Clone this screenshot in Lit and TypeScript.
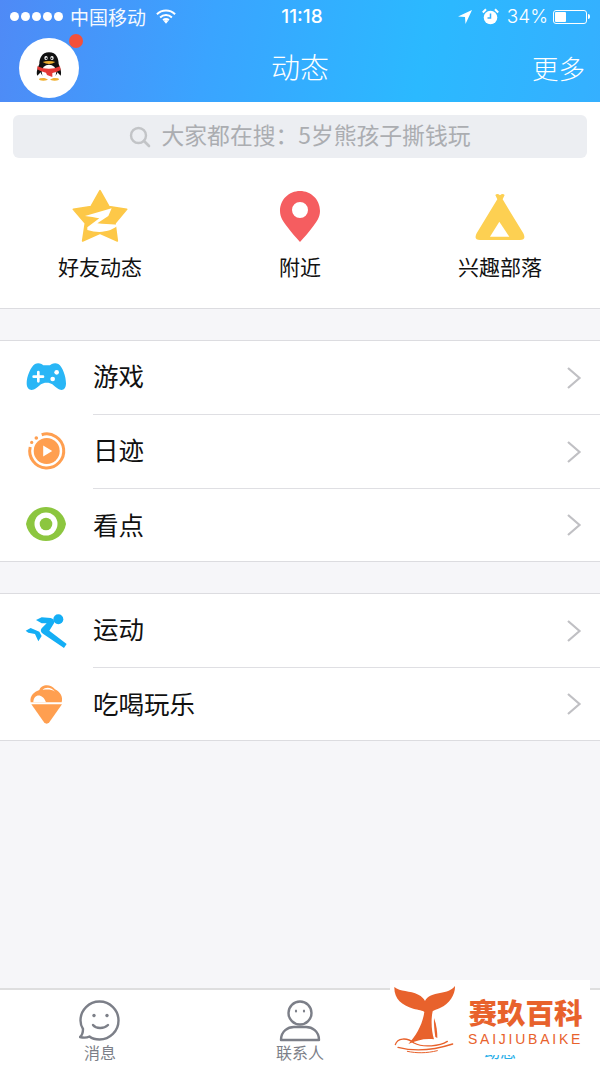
import { LitElement, html, css, svg } from "lit";
import { customElement } from "lit/decorators.js";

const chevron = html`<svg class="chev" width="16" height="24" viewBox="0 0 16 24"><path d="M2 2l11.500 10L2 22" fill="none" stroke="#c0c0c4" stroke-width="2.200"/></svg>`;

const gameIcon = svg`<g transform="translate(-21 -13) scale(.3333)"><path d="M105 72C115 66 128 72 130 76L150 76C152 72 165 66 175 72C188 80 198 110 198 130C198 150 185 155 172 145C160 135 155 128 140 128C125 128 120 135 108 145C95 155 80 150 80 130C80 110 92 80 105 72z" fill="#29b6f6"/><path d="M115 96v28M101 110h28" stroke="#fff" stroke-width="8" stroke-linecap="round"/><circle cx="170" cy="97" r="7" fill="#fff"/><circle cx="158" cy="117" r="7" fill="#fff"/></g>`;
const playIcon = svg`<g transform="translate(.7 -1)"><circle cx="25" cy="25" r="13" fill="#ff9f50"/><path d="M21.500 19.500v11l9-5.500z" fill="#fff"/><path d="M20 8.700A17 17 0 1 1 8.500 21" fill="none" stroke="#ff9f50" stroke-width="3"/><circle cx="14.600" cy="12" r="1.800" fill="#ff9f50"/><circle cx="10" cy="16.400" r="1.600" fill="#ff9f50"/></g>`;
const eyeIcon = svg`<path d="M5 24C7 13 16 7 25 7C34 7 43 13 45 24C43 35 34 41 25 41C16 41 7 35 5 24z" fill="#8cc63f"/><circle cx="25" cy="24" r="11.500" fill="#fff"/><circle cx="25" cy="24" r="6.300" fill="#8cc63f"/>`;
const runIcon = svg`<g transform="translate(-21 -16) scale(.3333)" fill="#14aef5"><circle cx="175" cy="88" r="15"/><path d="M108 90L125 82L152 84Q165 88 162 100L148 122L200 162L192 174L130 132Q118 125 125 115L140 100L125 100z"/><path d="M77 122L92 114L118 125L125 138L115 154L105 132L85 128z"/></g>`;
const iceIcon = svg`<g transform="translate(-21 -89) scale(.3333)"><path d="M92 337C88 315 105 305 118 300C122 285 150 278 165 298C180 305 190 320 185 337z" fill="#ff9f50"/><path d="M100 337C100 312 128 308 138 337zM128 300C135 290 155 290 165 305C155 298 140 298 128 300z" fill="#fff"/><path d="M94 343L186 343L148 397Q140 405 132 397z" fill="#ff9f50"/></g>`;

const lists = [
  [{ t: "游戏", i: gameIcon }, { t: "日迹", i: playIcon }, { t: "看点", i: eyeIcon }],
  [{ t: "运动", i: runIcon }, { t: "吃喝玩乐", i: iceIcon }],
];

@customElement("app-root")
export class AppRoot extends LitElement {
  static styles = css`
    :host {
      display: flex; flex-direction: column; position: relative;
      width: 600px; height: 1067px; overflow: hidden; background: #f6f6f9;
      font-family: "Liberation Sans", "Noto Sans CJK SC", sans-serif;
    }
    .cjk { font-family: "Noto Sans CJK SC", sans-serif; }
    .head { height: 102px; flex: none; color: #fff; background: linear-gradient(100deg, #4f8af6 0%, #3aa4ff 35%, #2bb9ff 70%, #35b0ff 100%); }
    .status { height: 33px; padding: 0 10px; display: flex; align-items: center; position: relative; box-sizing: border-box; }
    .dots { display: flex; gap: 2px; }
    .dots i { width: 9px; height: 9px; border-radius: 50%; background: #fff; }
    .carrier { font-size: 19px; margin-left: 7px; opacity: .95; }
    .wifi { margin-left: 10px; }
    .time { position: absolute; left: 4px; right: 0; top: 6px; text-align: center; font-family: Inter, sans-serif; font-size: 19px; font-weight: 500; line-height: 22px; }
    .sright { margin-left: auto; display: flex; align-items: center; }
    .pct { font-family: Inter, sans-serif; font-size: 19px; font-weight: 300; margin: 0 5px 0 8px; }
    .batt { width: 34px; height: 14px; border: 1px solid #fff; border-radius: 3px; box-sizing: border-box; padding: 1px; display: flex; }
    .batt i { width: 11px; background: #fff; border-radius: 1px; }
    .nub { width: 2px; height: 5px; background: #fff; margin-left: 1px; border-radius: 0 2px 2px 0; }
    .nav { height: 69px; display: flex; align-items: center; justify-content: space-between; padding: 0 15px 0 19px; position: relative; }
    .avatar { width: 60px; height: 60px; border-radius: 50%; background: #fff; position: relative; }
    .avatar svg { display: block; }
    .badge { position: absolute; width: 14px; height: 14px; background: #f4503a; border-radius: 50%; right: -4px; top: -4px; }
    .title { position: absolute; left: 0; right: 0; text-align: center; font-size: 29px; line-height: 40px; top: 13px; font-weight: 300; }
    .more { font-size: 26.500px; font-weight: 300; position: relative; }
    .top { background: #fff; border-bottom: 1px solid #dcdce0; height: 207px; box-sizing: border-box; padding-top: 13px; flex: none; }
    .search { margin: 0 13px; height: 43px; background: #eceef2; border-radius: 6px; display: flex; align-items: center; justify-content: center; color: #abadb1; font-size: 22.800px; gap: 10px; }
    .search span { padding-bottom: 4px; }
    .grid { display: grid; grid-template-columns: repeat(3, 1fr); margin-top: 30px; }
    .cell { display: flex; flex-direction: column; align-items: center; }
    .cell svg { display: block; }
    .cell span { font-size: 21px; line-height: 30px; margin-top: 9px; color: #111; }
    .list { background: #fff; margin-top: 31px; border-top: 1px solid #dcdce0; border-bottom: 1px solid #dcdce0; flex: none; }
    .row { height: 74px; display: flex; align-items: center; padding-left: 21px; box-sizing: border-box; }
    .row:last-child { height: 72px; }
    .row svg.ic { width: 50px; height: 50px; flex: none; }
    .row .lbl { margin-left: 22px; flex: 1; height: 100%; display: flex; align-items: center; justify-content: space-between; padding-right: 18px; font-size: 25.500px; color: #111; border-bottom: 1px solid #dfdfe3; box-sizing: border-box; }
    .row .lbl span { padding-bottom: 6px; }
    .row:last-child .lbl span { padding-bottom: 4px; }
    .row:last-child .lbl { border-bottom: none; }
    .spacer { flex: 1; }
    .tabs { height: 79px; flex: none; background: #fff; border-top: 2px solid #dededf; box-sizing: border-box; display: grid; grid-template-columns: repeat(3, 1fr); }
    .tab { display: flex; flex-direction: column; align-items: center; padding-top: 10px; font-size: 16px; color: #7c7f88; line-height: 22px; }
    .tab svg { display: block; margin-bottom: -1px; }
    .tab.on { color: #27aee8; justify-content: flex-end; padding-bottom: 5px; }
    .mark { position: absolute; left: 390px; top: 980px; width: 200px; height: 75px; background: #fff; display: flex; align-items: flex-start; color: #e8622c; }
    .mark svg { flex: none; }
    .mark-text { display: flex; flex-direction: column; align-items: center; margin-left: 3px; padding-top: 14px; }
    .mark b { font-size: 28.500px; line-height: 36px; font-weight: 900; white-space: nowrap; }
    .mark small { font-size: 14px; letter-spacing: 2.750px; line-height: 16px; margin-top: 1px; white-space: nowrap; font-family: "Liberation Sans", sans-serif; }
  `;

  render() {
    return html`
      <div class="head">
        <div class="status">
          <div class="dots"><i></i><i></i><i></i><i></i><i></i></div>
          <span class="carrier cjk">中国移动</span>
          <svg class="wifi" width="20" height="15" viewBox="0 0 22 16"><path d="M1 5.500a14.500 14.500 0 0 1 20 0M4.500 9a9.500 9.500 0 0 1 13 0M7.800 12a5 5 0 0 1 6.400 0" fill="none" stroke="#fff" stroke-width="2.200"/><path d="M11 16l-2.500-3a3.500 3.500 0 0 1 5 0z" fill="#fff"/></svg>
          <span class="time">11:18</span>
          <div class="sright">
            <svg width="16" height="16" viewBox="0 0 16 16"><path d="M15 1L1 7.500l7 .5.500 7z" fill="#fff"/></svg>
            <svg style="margin-left:9px" width="17" height="17" viewBox="0 0 17 17"><circle cx="8.500" cy="9.500" r="6.800" fill="#fff"/><path d="M8.500 5.500v4.500H5.500" fill="none" stroke="#35b0ff" stroke-width="1.500"/><path d="M.8 4.500L4 1.200M16.200 4.500L13 1.200" stroke="#fff" stroke-width="2"/></svg>
            <span class="pct">34%</span>
            <div class="batt"><i></i></div><div class="nub"></div>
          </div>
        </div>
        <div class="nav">
          <div class="avatar">
            <svg width="60" height="60" viewBox="57 112 180 180">
              <ellipse cx="130" cy="236" rx="13" ry="4" fill="#f0b030"/><ellipse cx="164" cy="236" rx="13" ry="4" fill="#f0b030"/>
              <path d="M147 155C125 155 118 175 118 190C112 205 108 215 112 225L122 215C125 235 170 235 172 215L182 225C186 215 180 200 176 190C176 175 170 155 147 155z" fill="#111"/>
              <ellipse cx="147" cy="214" rx="22" ry="22" fill="#fff"/>
              <ellipse cx="138" cy="172" rx="5" ry="6" fill="#fff"/><ellipse cx="156" cy="172" rx="5" ry="6" fill="#fff"/><circle cx="139" cy="173" r="2.500" fill="#111"/><circle cx="155" cy="173" r="2.500" fill="#111"/>
              <path d="M128 184Q147 178 166 184Q147 196 128 184z" fill="#f0b030"/>
              <path d="M112 197Q147 212 180 197L182 208Q168 215 157 217L157 229L141 223L138 216Q122 214 112 206z" fill="#e53935"/>
            </svg>
            <span class="badge"></span>
          </div>
          <span class="title cjk">动态</span>
          <span class="more cjk">更多</span>
        </div>
      </div>

      <div class="top">
        <div class="search cjk">
          <svg width="22" height="22" viewBox="0 0 22 22"><circle cx="9.500" cy="9.500" r="7.500" fill="none" stroke="#c2c4c7" stroke-width="2.400"/><path d="M15 15l5 5" stroke="#c2c4c7" stroke-width="2.600" stroke-linecap="round"/></svg>
          <span>大家都在搜：5岁熊孩子撕钱玩</span>
        </div>
        <div class="grid cjk">
          <div class="cell">
            <svg width="56" height="54" viewBox="0 0 56 54"><g transform="translate(-72 -78) scale(.3333)"><path d="M300 242L327 290L380 298L345 340L352 393L300 370L248 393L256 340L220 298L273 290Z" fill="#fdc848" stroke="#fdc848" stroke-width="5" stroke-linejoin="round"/><path d="M255 318L335 295L325 318L292 340C315 342 340 345 358 343C335 365 300 372 262 360L262 352L298 325C285 322 270 320 255 318z" fill="#fff"/></g></svg>
            <span>好友动态</span>
          </div>
          <div class="cell">
            <svg width="56" height="54" viewBox="0 0 56 54"><path fill-rule="evenodd" d="M28 3c11 0 20 8.500 20 20 0 6.500-3.500 11-7 15.500-4.500 6-8.500 10.500-13 15.500-4.500-5-8.500-9.500-13-15.500C11.500 34 8 29.500 8 23 8 11.500 17 3 28 3zm0 11a8 8 0 1 0 0 16 8 8 0 0 0 0-16z" fill="#f55d60"/></svg>
            <span>附近</span>
          </div>
          <div class="cell">
            <svg width="56" height="54" viewBox="0 0 56 54"><g transform="translate(-172 -78) scale(.3333)"><path d="M586 255Q592 248 600 256Q608 248 614 255L608 268L670 370Q680 390 660 390L540 390Q520 390 530 370L592 268z" fill="#fdd052"/><path d="M598 335L628 380L570 380z" fill="#fff"/></g></svg>
            <span>兴趣部落</span>
          </div>
        </div>
      </div>

      ${lists.map(
        (items) => html`<div class="list cjk">
          ${items.map(
            (r) => html`<div class="row"><svg class="ic" viewBox="0 0 50 50">${r.i}</svg><div class="lbl"><span>${r.t}</span>${chevron}</div></div>`
          )}
        </div>`
      )}

      <div class="spacer"></div>

      <div class="tabs cjk">
        <div class="tab">
          <svg width="42" height="42" viewBox="0 0 42 42"><path d="M4 29C2 26 1.500 23 1.500 20.500A19 19 0 1 1 20.500 39.500c-4 0-7.500-1-10-3-2 1-6 1.500-9.500.5 2-1.500 3-4.500 3-8z" fill="none" stroke="#7c7f88" stroke-width="2.400" stroke-linejoin="round"/><circle cx="15" cy="15.500" r="1.700" fill="#7c7f88"/><circle cx="28" cy="15.500" r="1.700" fill="#7c7f88"/><path d="M14 25c3 4 11 4 15 0" fill="none" stroke="#7c7f88" stroke-width="2.400" stroke-linecap="round"/></svg>
          <span>消息</span>
        </div>
        <div class="tab">
          <svg width="42" height="42" viewBox="0 0 42 42"><circle cx="21" cy="13" r="11.500" fill="none" stroke="#7c7f88" stroke-width="2.400"/><ellipse cx="17" cy="11" rx="1.100" ry="1.600" fill="#7c7f88"/><ellipse cx="25" cy="11" rx="1.100" ry="1.600" fill="#7c7f88"/><path d="M2 40c0-9 7-13 13-13h12c6 0 13 4 13 13z" fill="none" stroke="#7c7f88" stroke-width="2.400" stroke-linejoin="round"/></svg>
          <span>联系人</span>
        </div>
        <div class="tab on"><span>动态</span></div>
      </div>

      <div class="mark">
        <svg width="75" height="75" viewBox="0 -6 225 225" fill="#e8622c">
          <path d="M13 15C30 30 60 25 85 38C95 43 102 50 105 57C112 42 130 36 150 33C170 30 185 25 195 12C196 35 180 65 150 78C140 82 132 84 128 88C122 115 125 150 132 172C105 168 80 175 55 186C80 160 98 125 103 90C100 85 85 84 70 80C35 70 12 50 13 15z"/>
          <path d="M132 108C140 130 142 150 142 168L136 165C133 145 131 125 132 108z"/>
          <g fill="none" stroke="#e8622c" stroke-linecap="round">
            <path d="M16 188C22 168 50 165 72 183C100 198 150 192 172 178" stroke-width="4"/>
            <path d="M24 196C70 208 120 208 188 186" stroke-width="4"/>
            <path d="M52 208C80 214 110 214 142 206" stroke-width="3"/>
          </g>
        </svg>
        <div class="mark-text">
          <b class="cjk">赛玖百科</b>
          <small>SAIJIUBAIKE</small>
        </div>
      </div>
    `;
  }
}
